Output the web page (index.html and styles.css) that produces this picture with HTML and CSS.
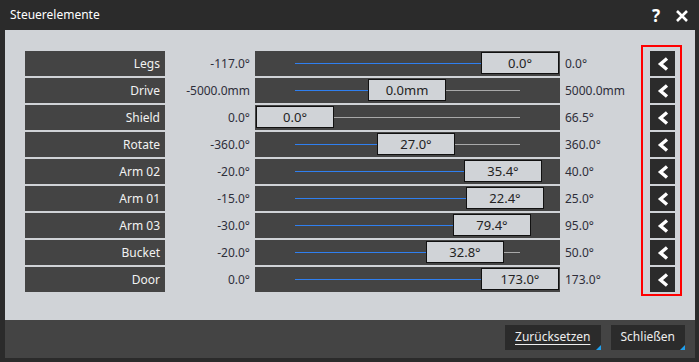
FILE: index.html
```html
<!DOCTYPE html>
<html lang="de">
<head>
    <meta charset="utf-8">
    <title>Steuerelemente</title>
    <link rel="stylesheet" href="styles.css">
</head>
<body>
<div class="window">
    <div class="titlebar">
        <span class="title">Steuerelemente</span>
        <span class="help">?</span>
        <svg class="close" width="14" height="14" viewBox="0 0 14 14">
            <path d="M2 2 L12 12 M12 2 L2 12" stroke="#fff" stroke-width="2.6" fill="none"/>
        </svg>
    </div>
    <div class="main">
        <div class="rows">
            <div class="row">
                <div class="label">Legs</div>
                <div class="min">-117.0°</div>
                <div class="slider"><div class="track">
                    <div class="fill" style="width: 225px"></div>
                    <div class="handle" style="left: 186px">0.0°</div>
                </div></div>
                <div class="max">0.0°</div>
            </div>
            <div class="row">
                <div class="label">Drive</div>
                <div class="min">-5000.0mm</div>
                <div class="slider"><div class="track">
                    <div class="fill" style="width: 112px"></div>
                    <div class="handle" style="left: 73px">0.0mm</div>
                </div></div>
                <div class="max">5000.0mm</div>
            </div>
            <div class="row">
                <div class="label">Shield</div>
                <div class="min">0.0°</div>
                <div class="slider"><div class="track">
                    <div class="fill" style="width: 0px"></div>
                    <div class="handle" style="left: -39px">0.0°</div>
                </div></div>
                <div class="max">66.5°</div>
            </div>
            <div class="row">
                <div class="label">Rotate</div>
                <div class="min">-360.0°</div>
                <div class="slider"><div class="track">
                    <div class="fill" style="width: 121px"></div>
                    <div class="handle" style="left: 82px">27.0°</div>
                </div></div>
                <div class="max">360.0°</div>
            </div>
            <div class="row">
                <div class="label">Arm 02</div>
                <div class="min">-20.0°</div>
                <div class="slider"><div class="track">
                    <div class="fill" style="width: 208px"></div>
                    <div class="handle" style="left: 169px">35.4°</div>
                </div></div>
                <div class="max">40.0°</div>
            </div>
            <div class="row">
                <div class="label">Arm 01</div>
                <div class="min">-15.0°</div>
                <div class="slider"><div class="track">
                    <div class="fill" style="width: 210px"></div>
                    <div class="handle" style="left: 171px">22.4°</div>
                </div></div>
                <div class="max">25.0°</div>
            </div>
            <div class="row">
                <div class="label">Arm 03</div>
                <div class="min">-30.0°</div>
                <div class="slider"><div class="track">
                    <div class="fill" style="width: 197px"></div>
                    <div class="handle" style="left: 158px">79.4°</div>
                </div></div>
                <div class="max">95.0°</div>
            </div>
            <div class="row">
                <div class="label">Bucket</div>
                <div class="min">-20.0°</div>
                <div class="slider"><div class="track">
                    <div class="fill" style="width: 170px"></div>
                    <div class="handle" style="left: 131px">32.8°</div>
                </div></div>
                <div class="max">50.0°</div>
            </div>
            <div class="row">
                <div class="label">Door</div>
                <div class="min">0.0°</div>
                <div class="slider"><div class="track">
                    <div class="fill" style="width: 225px"></div>
                    <div class="handle" style="left: 186px">173.0°</div>
                </div></div>
                <div class="max">173.0°</div>
            </div>
        </div>
        <div class="buttons">
            <div class="btn"><svg width="12" height="14" viewBox="0 0 12 14"><path d="M10 1.5 L3.5 7 L10 12.5" stroke="#fff" stroke-width="3.4" fill="none"/></svg></div>
            <div class="btn"><svg width="12" height="14" viewBox="0 0 12 14"><path d="M10 1.5 L3.5 7 L10 12.5" stroke="#fff" stroke-width="3.4" fill="none"/></svg></div>
            <div class="btn"><svg width="12" height="14" viewBox="0 0 12 14"><path d="M10 1.5 L3.5 7 L10 12.5" stroke="#fff" stroke-width="3.4" fill="none"/></svg></div>
            <div class="btn"><svg width="12" height="14" viewBox="0 0 12 14"><path d="M10 1.5 L3.5 7 L10 12.5" stroke="#fff" stroke-width="3.4" fill="none"/></svg></div>
            <div class="btn"><svg width="12" height="14" viewBox="0 0 12 14"><path d="M10 1.5 L3.5 7 L10 12.5" stroke="#fff" stroke-width="3.4" fill="none"/></svg></div>
            <div class="btn"><svg width="12" height="14" viewBox="0 0 12 14"><path d="M10 1.5 L3.5 7 L10 12.5" stroke="#fff" stroke-width="3.4" fill="none"/></svg></div>
            <div class="btn"><svg width="12" height="14" viewBox="0 0 12 14"><path d="M10 1.5 L3.5 7 L10 12.5" stroke="#fff" stroke-width="3.4" fill="none"/></svg></div>
            <div class="btn"><svg width="12" height="14" viewBox="0 0 12 14"><path d="M10 1.5 L3.5 7 L10 12.5" stroke="#fff" stroke-width="3.4" fill="none"/></svg></div>
            <div class="btn"><svg width="12" height="14" viewBox="0 0 12 14"><path d="M10 1.5 L3.5 7 L10 12.5" stroke="#fff" stroke-width="3.4" fill="none"/></svg></div>
        </div>
    </div>
    <div class="footer">
        <div class="fbtn reset">Zurücksetzen</div>
        <div class="fbtn">Schließen</div>
    </div>
</div>
</body>
</html>
```

FILE: styles.css
```css
body {
    margin: 0;
    font-family: "Noto Sans", sans-serif;
    font-size: 12px;
    background-color: #2b2b2b;
}

.window {
    width: 699px;
    height: 362px;
    box-sizing: border-box;
    background-color: #2b2b2b;
    padding: 0 4px 4px 5px;
    display: flex;
    flex-direction: column;
}

.titlebar {
    height: 30px;
    margin-left: -5px;
    margin-right: -4px;
    padding-left: 10px;
    display: flex;
    align-items: center;
    color: #fff;
}

.title {
    flex: 1;
    padding-bottom: 1px;
}

.help {
    font-size: 17px;
    font-weight: bold;
    margin-right: 15px;
    margin-top: 1px;
}

.close {
    margin-right: 10px;
    margin-top: 2px;
}

.main {
    flex: 1;
    background-color: #d0d3d7;
    padding: 15px 0 0 20px;
    display: flex;
    align-items: flex-start;
}

.rows {
    margin-top: 6px;
    display: flex;
    flex-direction: column;
    gap: 2px;
    width: 616px;
}

.row {
    height: 25px;
    display: flex;
    align-items: center;
}

.label {
    width: 140px;
    height: 25px;
    box-sizing: border-box;
    line-height: 25px;
    background-color: #444;
    color: #f2f2f2;
    text-align: right;
    padding-right: 5px;
}

.min {
    width: 90px;
    box-sizing: border-box;
    text-align: right;
    padding-right: 5px;
    color: #2e2e3a;
}

.slider {
    width: 305px;
    height: 25px;
    background-color: #444;
    display: flex;
    align-items: center;
}

.track {
    position: relative;
    margin-left: 40px;
    width: 225px;
    height: 1px;
    background-color: #a9a9a9;
}

.fill {
    height: 1px;
    background-color: #2f7ff0;
}

.handle {
    position: absolute;
    top: -11px;
    width: 78px;
    height: 22px;
    box-sizing: border-box;
    border: 1px solid #111;
    background-color: #d0d3d7;
    color: #222;
    font-size: 13px;
    text-align: center;
    line-height: 20px;
}

.max {
    flex: 1;
    padding-left: 5px;
    color: #2e2e3a;
}

.buttons {
    border: 2px solid #f00;
    padding: 4px 5px 2px 7px;
    display: flex;
    flex-direction: column;
    gap: 2px;
}

.btn {
    width: 25px;
    height: 25px;
    background-color: #2b2b2b;
    display: flex;
    align-items: center;
    justify-content: center;
}

.footer {
    height: 38px;
    box-sizing: border-box;
    background-color: #444;
    display: flex;
    justify-content: flex-end;
    gap: 10px;
    padding: 5px 10px 0 0;
}

.fbtn {
    position: relative;
    height: 25px;
    line-height: 24px;
    padding: 0 10px;
    background-color: #2b2b2b;
    color: #eee;
}

.fbtn:after {
    position: absolute;
    content: "";
    right: 0;
    bottom: 0;
    width: 0;
    height: 0;
    border-style: solid;
    border-width: 0 0 5px 5px;
    border-color: transparent transparent #1ea0f0 transparent;
}

.reset {
    text-decoration: underline;
    text-underline-offset: 3px;
}
```
